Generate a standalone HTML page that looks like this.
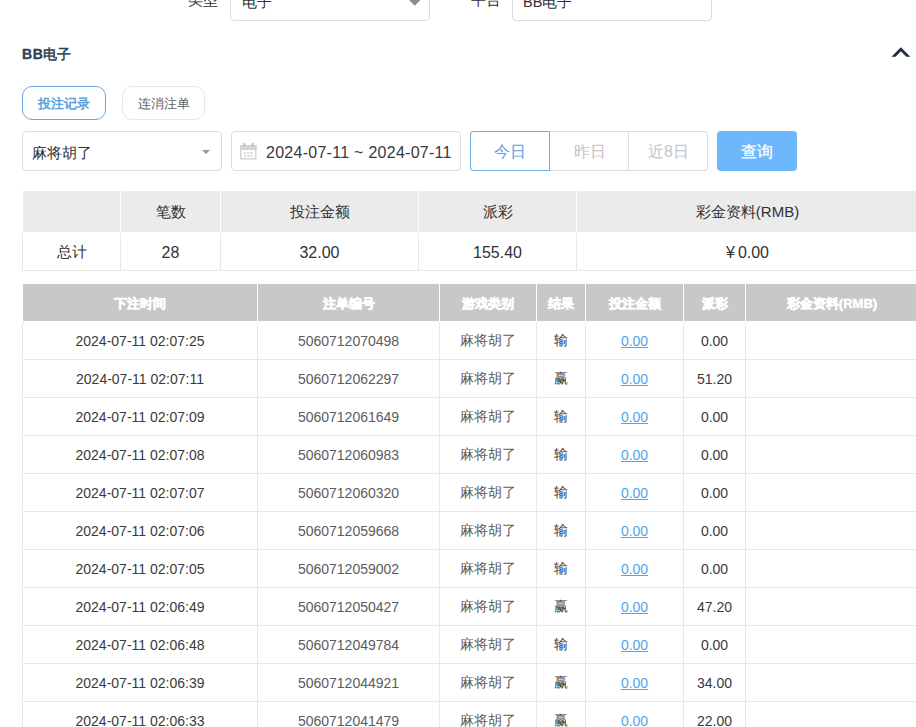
<!DOCTYPE html>
<html><head><meta charset="utf-8">
<style>
*{box-sizing:border-box;margin:0;padding:0}
html,body{width:916px;height:727px;overflow:hidden;background:#fff;font-family:"Liberation Sans",sans-serif;color:#333}
.abs{position:absolute}
.sel{position:absolute;border:1px solid #dcdcdc;border-radius:4px;background:#fff}
.lbl{position:absolute;font-size:16px;color:#303133;line-height:20px}
.tri{position:absolute;width:0;height:0;border-left:6px solid transparent;border-right:6px solid transparent;border-top:6px solid #909399}
.btn{position:absolute;border:1px solid #e4e7ed;border-radius:10px;font-size:14px;text-align:center;line-height:32px;color:#606266}
.tbl{position:absolute;border-collapse:collapse;table-layout:fixed}
.tbl tr{height:38px}
.tbl u{color:#4ea6ec;text-decoration:underline}
#det tr+tr td{color:#3a3a3a}
#det tr+tr td:nth-child(2),#det tr+tr td:nth-child(3){color:#5c5c5c}
#det tr:first-child td{padding-top:2px}
.sumd td{padding-top:2px}
.tbl td{text-align:center;border:1px solid #e8e8e8;overflow:hidden;white-space:nowrap}
</style></head><body>
<!-- top partial form row -->
<div class="lbl" style="left:188px;top:-10px;font-size:14.5px">类型</div>
<div class="sel" style="left:230px;top:-20px;width:200px;height:41px"></div>
<div class="lbl" style="left:242px;top:-8px;font-size:14.5px">电子</div>
<div class="abs" style="left:410.5px;top:-4.3px;width:7.5px;height:7.5px;background:#8c8c8c;transform:rotate(45deg)"></div>
<div class="lbl" style="left:471px;top:-10px;font-size:14.5px">平台</div>
<div class="sel" style="left:512px;top:-20px;width:200px;height:41px"></div>
<div class="lbl" style="left:523px;top:-8px;font-size:14.5px">BB电子</div>

<!-- section header -->
<div class="abs" style="left:22px;top:44px;font-size:14px;font-weight:bold;color:#2c3e50;line-height:20px;"><span style="letter-spacing:0.6px;-webkit-text-stroke:0.3px #2c3e50">BB</span><span style="font-weight:normal;-webkit-text-stroke:0.5px #2c3e50">电子</span></div>
<svg class="abs" style="left:0;top:0" width="916" height="70"><polygon points="891.5,56.8 900.9,47.2 910.3,56.8 906.3,56.8 900.9,51.3 895.5,56.8" fill="#1f2d3d"/></svg>

<!-- tabs -->
<div class="btn" style="left:22px;top:86px;width:84px;height:34px;border-color:#6aa7e0;color:#5a9fe0;font-size:13px;-webkit-text-stroke:0.55px #5a9fe0;line-height:33px">投注记录</div>
<div class="btn" style="left:122px;top:86px;width:83px;height:34px;font-size:13px;line-height:33px">连消注单</div>

<!-- filter row -->
<div class="sel" style="left:22px;top:131px;width:200px;height:40px"></div>
<div class="lbl" style="left:32px;top:143px;font-size:14.5px">麻将胡了</div>
<div class="tri" style="left:201.5px;top:150px;border-width:4.5px 4.5px 0 4.5px;border-top-color:#999"></div>

<div class="sel" style="left:231px;top:131px;width:230px;height:40px"></div>
<svg class="abs" style="left:240px;top:143px" width="17" height="17" viewBox="0 0 17 17"><rect x="0" y="2" width="16.5" height="5" fill="#d4d4d4"/><rect x="0.75" y="2.75" width="15" height="13" fill="none" stroke="#d4d4d4" stroke-width="1.5"/><rect x="3" y="0" width="2.5" height="4" fill="#c8c8c8"/><rect x="11.5" y="0" width="2.5" height="4" fill="#c8c8c8"/><g fill="#d8d8d8"><rect x="4" y="9" width="2" height="2"/><rect x="7.25" y="9" width="2" height="2"/><rect x="10.5" y="9" width="2" height="2"/><rect x="4" y="12" width="2" height="2"/><rect x="7.25" y="12" width="2" height="2"/><rect x="10.5" y="12" width="2" height="2"/></g></svg>
<div class="lbl" style="left:266px;top:142.5px;letter-spacing:0.27px;color:#3a3a3a">2024-07-11 ~ 2024-07-11</div>

<div class="abs" style="left:470px;top:131px;width:238px;height:40px;border:1px solid #dcdcdc;border-radius:3px"></div>
<div class="abs" style="left:549px;top:131px;width:80px;height:40px;border-left:1px solid #dcdcdc;color:#c4c4c4;font-size:16px;text-align:center;line-height:41px">昨日</div>
<div class="abs" style="left:628px;top:131px;width:80px;height:40px;border-left:1px solid #dcdcdc;color:#c4c4c4;font-size:16px;text-align:center;line-height:41px">近8日</div>
<div class="abs" style="left:470px;top:131px;width:80px;height:40px;border:1px solid #6eaee8;border-radius:3px 0 0 3px;color:#5a9fe0;font-size:16px;text-align:center;line-height:39px;z-index:2">今日</div>
<div class="abs" style="left:717px;top:131px;width:80px;height:40px;background:#6cb8fb;border-radius:4px;color:#fff;font-size:16px;-webkit-text-stroke:0.25px #fff;text-align:center;line-height:41px">查询</div>

<!-- summary table -->
<table class="tbl" style="left:22px;top:190px;width:896px;font-size:16px;color:#303133">
<colgroup><col style="width:98px"><col style="width:100px"><col style="width:198px"><col style="width:158px"><col style="width:342px"></colgroup>
<tr style="height:42px;background:#ebebeb;font-size:15px"><td style="border-color:#fff;padding-top:2px"></td><td style="border-color:#fff;padding-top:2px">笔数</td><td style="border-color:#fff;padding-top:2px">投注金额</td><td style="border-color:#fff;padding-top:2px">派彩</td><td style="border-color:#fff;padding-top:2px">彩金资料(RMB)</td></tr>
<tr style="height:38px" class="sumd"><td style="font-size:15px">总计</td><td>28</td><td>32.00</td><td>155.40</td><td><span style="margin-right:3px">¥</span>0.00</td></tr>
</table>

<!-- details table -->
<table class="tbl" id="det" style="left:22px;top:283px;width:896px;font-size:14px;color:#303133">
<colgroup><col style="width:235px"><col style="width:182px"><col style="width:97px"><col style="width:49px"><col style="width:98px"><col style="width:62px"><col style="width:173px"></colgroup>
<tr style="height:38px;background:#c8c8c8;color:#fff;font-weight:bold;font-size:13px;-webkit-text-stroke:0.5px #fff"><td style="border-color:#fff">下注时间</td><td style="border-color:#fff">注单编号</td><td style="border-color:#fff">游戏类别</td><td style="border-color:#fff">结果</td><td style="border-color:#fff">投注金额</td><td style="border-color:#fff">派彩</td><td style="border-color:#fff">彩金资料(RMB)</td></tr>
<tr><td>2024-07-11 02:07:25</td><td>5060712070498</td><td>麻将胡了</td><td>输</td><td><u>0.00</u></td><td>0.00</td><td></td></tr>
<tr><td>2024-07-11 02:07:11</td><td>5060712062297</td><td>麻将胡了</td><td>赢</td><td><u>0.00</u></td><td>51.20</td><td></td></tr>
<tr><td>2024-07-11 02:07:09</td><td>5060712061649</td><td>麻将胡了</td><td>输</td><td><u>0.00</u></td><td>0.00</td><td></td></tr>
<tr><td>2024-07-11 02:07:08</td><td>5060712060983</td><td>麻将胡了</td><td>输</td><td><u>0.00</u></td><td>0.00</td><td></td></tr>
<tr><td>2024-07-11 02:07:07</td><td>5060712060320</td><td>麻将胡了</td><td>输</td><td><u>0.00</u></td><td>0.00</td><td></td></tr>
<tr><td>2024-07-11 02:07:06</td><td>5060712059668</td><td>麻将胡了</td><td>输</td><td><u>0.00</u></td><td>0.00</td><td></td></tr>
<tr><td>2024-07-11 02:07:05</td><td>5060712059002</td><td>麻将胡了</td><td>输</td><td><u>0.00</u></td><td>0.00</td><td></td></tr>
<tr><td>2024-07-11 02:06:49</td><td>5060712050427</td><td>麻将胡了</td><td>赢</td><td><u>0.00</u></td><td>47.20</td><td></td></tr>
<tr><td>2024-07-11 02:06:48</td><td>5060712049784</td><td>麻将胡了</td><td>输</td><td><u>0.00</u></td><td>0.00</td><td></td></tr>
<tr><td>2024-07-11 02:06:39</td><td>5060712044921</td><td>麻将胡了</td><td>赢</td><td><u>0.00</u></td><td>34.00</td><td></td></tr>
<tr><td>2024-07-11 02:06:33</td><td>5060712041479</td><td>麻将胡了</td><td>赢</td><td><u>0.00</u></td><td>22.00</td><td></td></tr>
</table>
</body></html>
